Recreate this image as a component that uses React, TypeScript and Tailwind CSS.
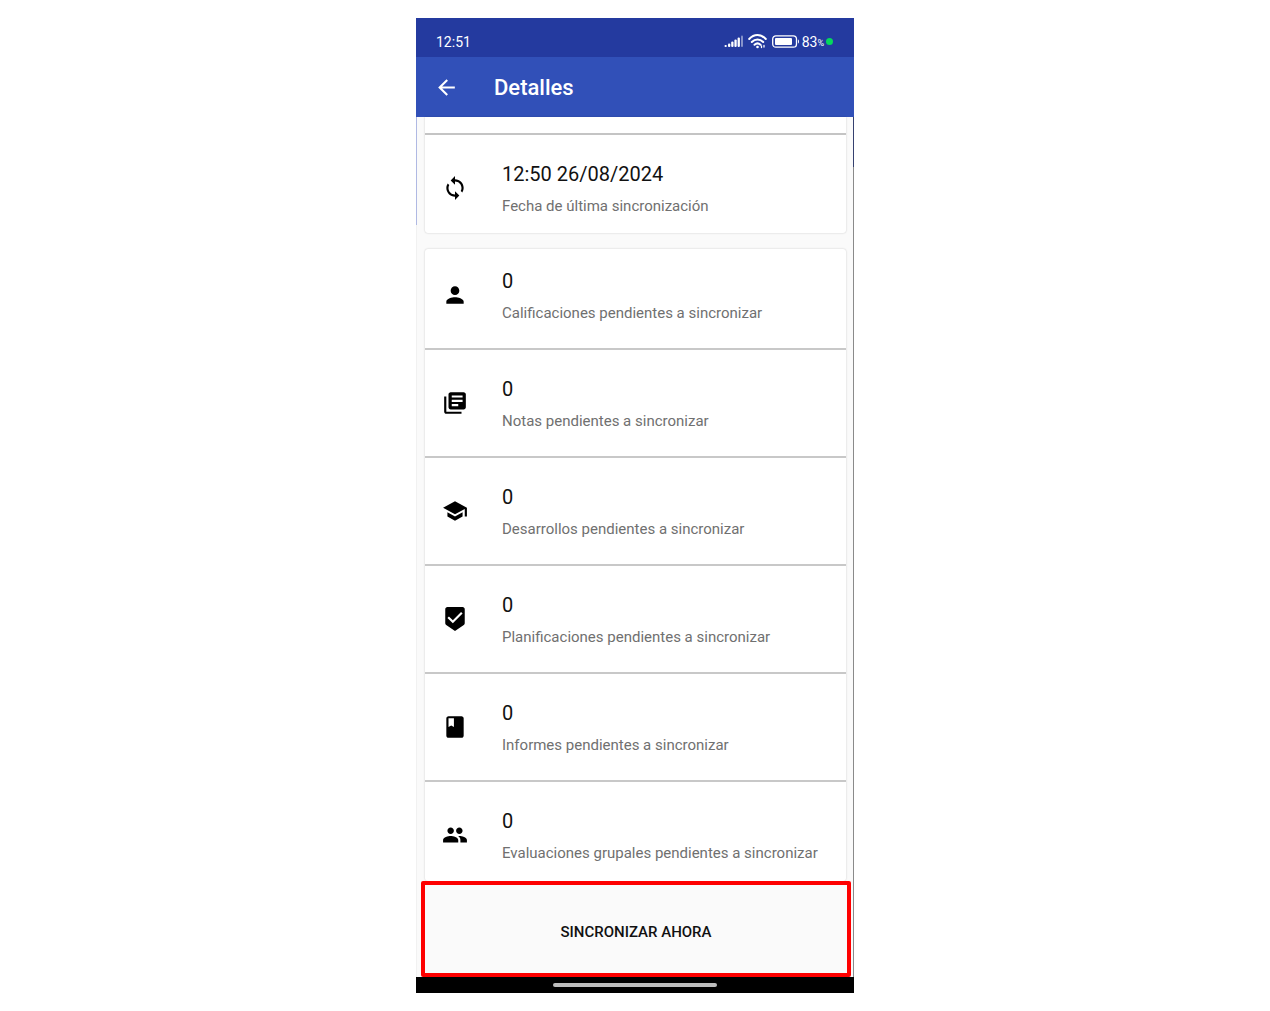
import type { ReactNode } from "react";
import {
  MdArrowBack,
  MdBeenhere,
  MdBook,
  MdLibraryBooks,
  MdPeople,
  MdPerson,
  MdSchool,
  MdSync,
} from "react-icons/md";

const pending = [
  { icon: <MdPerson />, count: 0, label: "Calificaciones pendientes a sincronizar" },
  { icon: <MdLibraryBooks />, count: 0, label: "Notas pendientes a sincronizar" },
  { icon: <MdSchool />, count: 0, label: "Desarrollos pendientes a sincronizar" },
  { icon: <MdBeenhere />, count: 0, label: "Planificaciones pendientes a sincronizar" },
  { icon: <MdBook />, count: 0, label: "Informes pendientes a sincronizar" },
  { icon: <MdPeople />, count: 0, label: "Evaluaciones grupales pendientes a sincronizar" },
];

function Row({ icon, title, label }: { icon: ReactNode; title: string | number; label: string }) {
  return (
    <div className="flex items-center h-[90px] pl-[17px]">
      <span className="text-[26px] w-[60px] shrink-0 text-black">{icon}</span>
      <div className="pt-1">
        <p className="text-[20px] leading-7 text-[#111]">{title}</p>
        <p className="mt-1 text-[15px] leading-7 text-[#707070] whitespace-nowrap">{label}</p>
      </div>
    </div>
  );
}

function StatusBar() {
  return (
    <div className="flex items-center justify-between h-[39px] pt-2 pl-5 pr-[21px] bg-[#243a9f] text-white text-[14px]">
      <span className="pt-px">12:51</span>
      <div className="flex items-center">
        <svg width="20" height="13" viewBox="0 0 20 13" fill="#fff">
          <rect x="0.500" y="10" width="2.300" height="2" rx="1" />
          <rect x="4" y="8.500" width="2.300" height="3.500" rx="1" />
          <rect x="7.200" y="6.500" width="2.300" height="5.500" rx="1" />
          <rect x="10.400" y="4.500" width="2.300" height="7.500" rx="1" />
          <rect x="13.600" y="2.500" width="2.300" height="9.500" rx="1" />
          <rect x="17" y="0.500" width="2" height="11.500" rx="1" opacity=".45" />
        </svg>
        <svg className="ml-1" width="19" height="15" viewBox="0 0 19 15" fill="none" stroke="#fff" strokeWidth="2" strokeLinecap="round">
          <path d="M1.200 5C6-.2 13-.2 17.800 5M3.800 8c3.400-3.500 8-3.500 11.400 0M6.500 10.800c1.800-1.700 4.200-1.700 6 0" />
          <circle cx="9.500" cy="13" r="1.300" fill="#fff" stroke="none" />
          <path d="M13.500 12v1.500M16 11.500v1.500" strokeWidth="1.300" />
        </svg>
        <svg className="ml-[5px]" width="28" height="13" viewBox="0 0 28 13">
          <rect x=".7" y=".8" width="23.800" height="11.400" rx="3.200" fill="none" stroke="#fff" strokeWidth="1.300" />
          <rect x="3" y="3" width="17" height="7" rx="1" fill="#fff" />
          <path d="M26 4.500c1.300.4 1.300 3.600 0 4z" fill="#fff" />
        </svg>
        <span className="ml-[2px] pt-px">83</span>
        <span className="text-[9px] pt-1">%</span>
        <span className="ml-[2px] size-[7px] rounded-full bg-[#05d85c]" />
      </div>
    </div>
  );
}

export default function App() {
  return (
    <div className="flex justify-center py-[18px] bg-white font-[Roboto,sans-serif]">
      <main className="w-full max-w-[438px]">
        <StatusBar />
        <header className="flex items-center h-[60px] px-[18px] bg-[#3150b8] text-white">
          <button type="button" aria-label="Volver" className="text-[25px]">
            <MdArrowBack />
          </button>
          <h1 className="ml-[35px] pt-[2px] text-[22px] leading-7 font-medium">Detalles</h1>
        </header>

        <div className="flex bg-[#fafafa]">
          <div className="w-px bg-linear-to-b from-[#b0b9e3] from-[108px] to-[#f1f1f1] to-[108px]" />
          <div className="flex-1 min-w-0">
            <div className="pl-2 pr-[7px]">
              <section className="bg-white rounded-b-[3px] shadow-[0_0_2px_rgba(0,0,0,0.22)]">
                <div className="h-4" />
                <div className="pt-2 border-t-2 border-[#c4c4c4]">
                  <Row icon={<MdSync />} title="12:50 26/08/2024" label="Fecha de última sincronización" />
                </div>
              </section>
              <section className="mt-4 pt-px bg-white rounded-[3px] shadow-[0_0_2px_rgba(0,0,0,0.22)]">
                {pending.map((item, i) => (
                  <div
                    key={item.label}
                    className={i === 0 ? "pb-2" : "py-2 border-t-2 border-[#c8c8c8] last:pb-px"}
                  >
                    <Row icon={item.icon} title={item.count} label={item.label} />
                  </div>
                ))}
              </section>
            </div>
            <div className="relative pl-1 pr-[2px]">
              <button
                type="button"
                className="block w-full h-24 pt-[6px] rounded-[2px] border-4 border-[#fe0000] bg-[#fafafa] text-[15px] font-medium text-[#111]"
              >
                SINCRONIZAR AHORA
              </button>
            </div>
          </div>
          <div className="w-px bg-linear-to-b from-[#35406f] from-[50px] to-[#8a8a8a] to-[50px]" />
        </div>

        <div className="flex justify-center items-center h-4 bg-black">
          <span className="w-[164px] h-1 rounded-full bg-[#bdbdbd]" />
        </div>
      </main>
    </div>
  );
}
